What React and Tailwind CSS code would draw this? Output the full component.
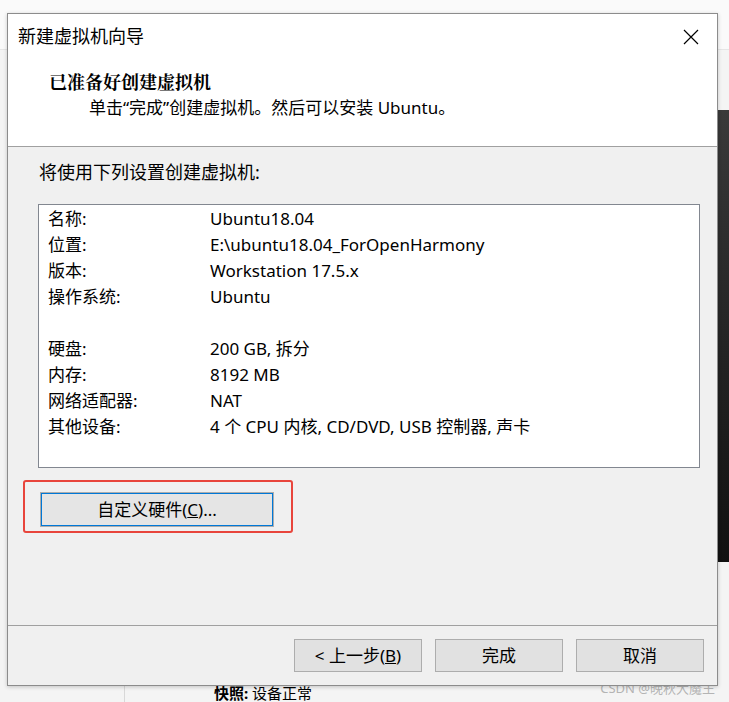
import React from "react";

const font = "font-['Noto_Sans','Noto_Sans_CJK_SC',sans-serif]";

const rows = [
  ["名称:", "Ubuntu18.04"],
  ["位置:", "E:\\ubuntu18.04_ForOpenHarmony"],
  ["版本:", "Workstation 17.5.x"],
  ["操作系统:", "Ubuntu"],
  ["", ""],
  ["硬盘:", "200 GB, 拆分"],
  ["内存:", "8192 MB"],
  ["网络适配器:", "NAT"],
  ["其他设备:", "4 个 CPU 内核, CD/DVD, USB 控制器, 声卡"],
];

const WinButton = ({ children, className = "" }) => (
  <button
    type="button"
    className={`flex items-center justify-center border border-[#adadad] bg-[#e1e1e1] text-[17px] text-black ${className}`}
  >
    {children}
  </button>
);

const App = () => {
  return (
    <div className={`relative w-[729px] h-[702px] overflow-hidden bg-[#f4f4f4] ${font}`}>
      {/* desktop behind the dialog */}
      <div className="absolute left-0 top-0 w-[729px] h-[50px] bg-[#fafafa] border-b border-[#e6e6e6]" />
      <div className="absolute right-0 top-[110px] w-[14px] h-[452px] bg-gradient-to-b from-[#3a3a3a] to-[#111111]" />
      <div className="absolute left-[124px] top-[686px] w-px h-[16px] bg-[#d8d8d8]" />
      <div className="absolute left-[214px] top-[686px] text-[15px] leading-[15px] text-black">
        <span className="font-bold">快照:</span> 设备正常
      </div>
      <div className="absolute right-[14px] top-[680px] text-[13px] leading-[16px] text-[#b4b4b4]">
        CSDN @晚秋大魔王
      </div>

      {/* dialog window */}
      <div className="absolute left-[7px] top-[13px] w-[711px] h-[673px] flex flex-col border border-[#8c8c8c] bg-[#f0f0f0] shadow-[0_1px_4px_rgba(0,0,0,0.2)]">
        {/* header */}
        <div className="bg-white border-b border-[#a0a0a0] h-[133px] flex flex-col">
          <div className="h-[45px] flex items-center justify-between pl-[10px] pr-[18px]">
            <span className="text-[18px] text-black">新建虚拟机向导</span>
            <svg width="16" height="16" viewBox="0 0 16 16" className="text-black">
              <path d="M1 1 L15 15 M15 1 L1 15" stroke="currentColor" strokeWidth="1.2" fill="none" />
            </svg>
          </div>
          <div className="pl-[41px] mt-[10px] text-[18px] leading-[24px] font-bold text-black font-['Noto_Serif_CJK_SC','Noto_Sans_CJK_SC',serif]">
            已准备好创建虚拟机
          </div>
          <div className="pl-[81px] mt-[3px] text-[17px] leading-[24px] text-black">
            单击“完成”创建虚拟机。然后可以安装 Ubuntu。
          </div>
        </div>

        {/* body */}
        <div className="flex-1 flex flex-col pl-[30px] pr-[17px]">
          <div className="mt-[13px] pl-[1px] text-[18px] leading-[24px] text-black">
            将使用下列设置创建虚拟机:
          </div>
          <div className="mt-[20px] h-[264px] bg-white border border-[#828790] pt-[1px] pl-[9px]">
            {rows.map(([label, value], i) => (
              <div key={i} className="flex h-[26px] items-center text-[17px] text-black">
                <span className="w-[162px] shrink-0">{label}</span>
                <span>{value}</span>
              </div>
            ))}
          </div>
          <div className="relative mt-[24px] ml-[2px]">
            <WinButton className="w-[234px] h-[35px] border-[#0078d7] bg-[#e5e5e5] shadow-[inset_0_0_0_1px_#0078d7]">
              自定义硬件(<span className="underline">C</span>)...
            </WinButton>
            {/* red annotation box */}
            <div className="absolute left-[-17px] top-[-12px] w-[270px] h-[53px] border-2 border-[#e8453c] rounded-[3px]" />
          </div>
        </div>

        {/* footer */}
        <div className="h-[60px] border-t border-[#a0a0a0] flex items-start justify-end gap-[13px] pt-[13px] pr-[13px]">
          <WinButton className="w-[128px] h-[33px]">
            &lt; 上一步(<span className="underline">B</span>)
          </WinButton>
          <WinButton className="w-[128px] h-[33px]">完成</WinButton>
          <WinButton className="w-[128px] h-[33px]">取消</WinButton>
        </div>
      </div>
    </div>
  );
};

export default App;
